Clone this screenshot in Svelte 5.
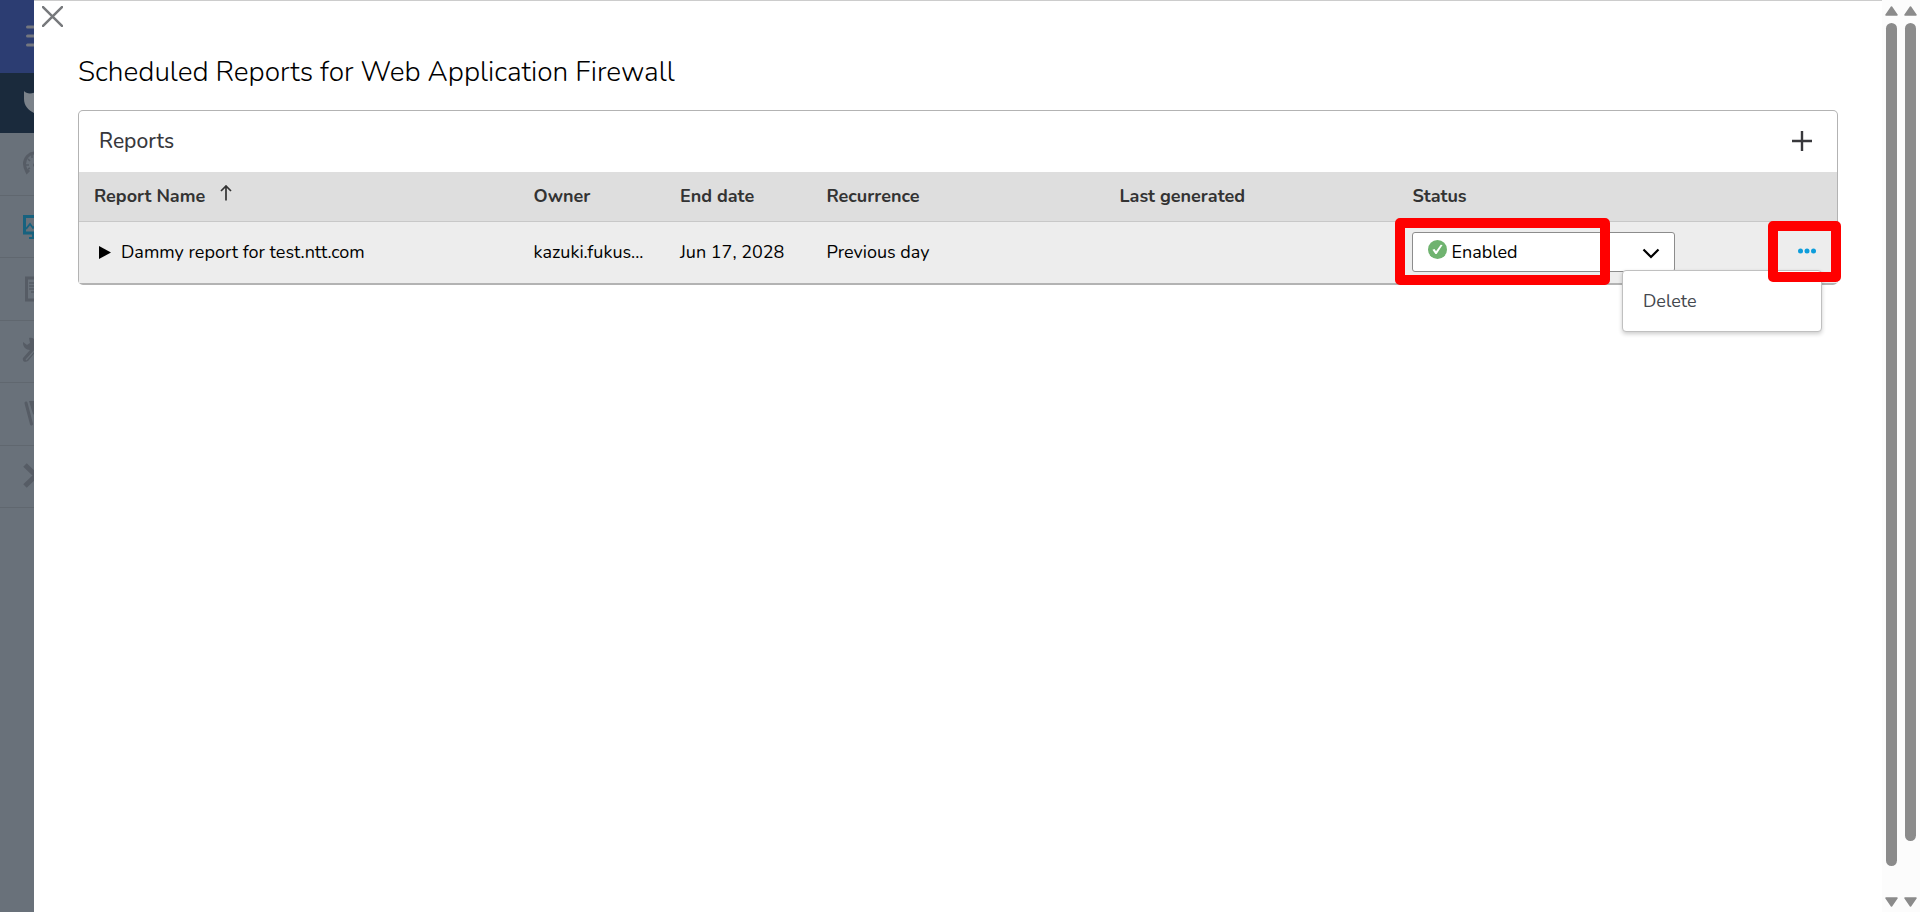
<script lang="ts">
  type Report = {
    id: number
    name: string
    owner: string
    endDate: string
    recurrence: string
    lastGenerated: string
    status: string
  }

  const reports: Report[] = [
    {
      id: 1,
      name: 'Dammy report for test.ntt.com',
      owner: 'kazuki.fukus...',
      endDate: 'Jun 17, 2028',
      recurrence: 'Previous day',
      lastGenerated: '',
      status: 'Enabled'
    }
  ]

  const scrollbars = ['outer', 'inner']

  // Report whose action menu is open
  let openMenu: number | null = $state(1)

  function toggleMenu(id: number) {
    openMenu = openMenu === id ? null : id
  }
</script>

<div class="shell">
  <!-- Dimmed navigation behind the dialog -->
  <nav class="rail" aria-label="Main">
    <div class="rail-top">
      <svg width="34" height="73" viewBox="0 0 34 73" aria-hidden="true">
        <path d="M27.500 27H46M27.500 36H46M27.500 45H46" stroke="#74777f" stroke-width="3" stroke-linecap="round" />
      </svg>
    </div>
    <div class="rail-brand">
      <svg width="34" height="60" viewBox="0 0 34 60" aria-hidden="true">
        <path d="M24 18C26 21 32 21 36 19V41C29 38 24 33 24 26Z" fill="#7b828a" />
      </svg>
    </div>
    <div class="rail-items">
      <div class="rail-item">
        <svg width="34" height="60" viewBox="0 1 34 60" aria-hidden="true">
          <path d="M35 21C29 21 24.500 26 24.500 32C24.500 35 25.500 37 27 40L29 38" fill="none" stroke="#565c65" stroke-width="3" />
          <path d="M28 27l2 2M26 33h3M32 23v3M28 37l2-1" stroke="#565c65" stroke-width="1.500" />
          <circle cx="35" cy="33" r="2" fill="#565c65" />
        </svg>
      </div>
      <div class="rail-item">
        <svg width="34" height="60" viewBox="0 1 34 60" aria-hidden="true">
          <path d="M36 21.500H24.500V38H36" fill="none" stroke="#17627f" stroke-width="3" />
          <path d="M26 34l4-5 3 4 3-3M29 43h7M33 39v4" fill="none" stroke="#17627f" stroke-width="1.800" />
        </svg>
      </div>
      <div class="rail-item">
        <svg width="34" height="60" viewBox="0 1 34 60" aria-hidden="true">
          <path d="M36 21H26.500V43H36" fill="none" stroke="#565c65" stroke-width="3" />
          <path d="M29 26h6M29 29h6M29 32h6M31 35h4" stroke="#565c65" stroke-width="1.500" />
        </svg>
      </div>
      <div class="rail-item">
        <svg width="34" height="60" viewBox="0 1 34 60" aria-hidden="true">
          <path d="M23 22l4 3 3-2-1-5c4-1 7 2 8 6v6l-9 11c-3 2-6 0-5-3l7-8c-4 0-7-3-7-7Z" fill="#565c65" />
          <path d="M26 40l9-10" stroke="#69717a" stroke-width="1.200" />
        </svg>
      </div>
      <div class="rail-item">
        <svg width="34" height="60" viewBox="0 1 34 60" aria-hidden="true">
          <path d="M26 21L31.500 42" stroke="#565c65" stroke-width="3" stroke-linecap="round" />
          <path d="M29 19H36V34L33 32Z" fill="#565c65" />
        </svg>
      </div>
      <div class="rail-item">
        <svg width="34" height="60" viewBox="0 1 34 60" aria-hidden="true">
          <path d="M25 20L36 30.500L25 41" fill="none" stroke="#565c65" stroke-width="5" />
        </svg>
      </div>
    </div>
  </nav>

  <main class="dialog">
    <button class="icon-button close" aria-label="Close">
      <svg width="21" height="21" viewBox="0 0 20 20" aria-hidden="true">
        <path d="M1 1L19 19M19 1L1 19" stroke="#77797c" stroke-width="2.400" stroke-linecap="round" />
      </svg>
    </button>

    <h1>Scheduled Reports for Web Application Firewall</h1>

    <section class="card">
      <header class="card-header">
        <h2>Reports</h2>
        <button class="icon-button" aria-label="Add report">
          <svg width="20" height="20" viewBox="0 0 20 20" aria-hidden="true">
            <path d="M10 0V20M0 10H20" stroke="#38383c" stroke-width="2.400" />
          </svg>
        </button>
      </header>

      <table>
        <thead>
          <tr>
            <th class="col-wide">
              Report Name
              <svg class="sort" width="12" height="16" viewBox="0 0 12 16" aria-hidden="true">
                <path d="M6 15.500V1.500M1 6L6 1L11 6" fill="none" stroke="#333" stroke-width="1.700" />
              </svg>
            </th>
            <th class="col-small">Owner</th>
            <th class="col-small">End date</th>
            <th class="col-medium">Recurrence</th>
            <th class="col-medium">Last generated</th>
            <th class="col-medium">Status</th>
            <th class="col-small" aria-label="Actions"></th>
          </tr>
        </thead>
        <tbody>
          {#each reports as report (report.id)}
            <tr>
              <td>
                <div class="name">
                  <button class="icon-button" aria-label="Expand report">
                    <svg width="12" height="13" viewBox="0 0 12 13" aria-hidden="true">
                      <path d="M0 0L12 6.500L0 13Z" fill="#000" />
                    </svg>
                  </button>
                  <span>{report.name}</span>
                </div>
              </td>
              <td>{report.owner}</td>
              <td>{report.endDate}</td>
              <td>{report.recurrence}</td>
              <td>{report.lastGenerated}</td>
              <td>
                <div class="status">
                  <select aria-label="Status" value={report.status}>
                    <option>Enabled</option>
                    <option>Disabled</option>
                  </select>
                  <svg class="check" width="19" height="19" viewBox="0 0 18 18" aria-hidden="true">
                    <circle cx="9" cy="9" r="9" fill="#6fb36f" />
                    <path d="M4.200 9.200L6.200 8.600L7.600 10.600L12 4.500L13.800 4.800L8.200 13.200H7Z" fill="#fff" />
                  </svg>
                  <svg class="chevron" width="18" height="11" viewBox="0 0 18 11" aria-hidden="true">
                    <path d="M1.500 1.500L9 9L16.500 1.500" fill="none" stroke="#000" stroke-width="2.200" />
                  </svg>
                  <div class="highlight highlight--status"></div>
                </div>
              </td>
              <td>
                <div class="actions">
                  <button
                    class="icon-button"
                    aria-label="More actions"
                    aria-expanded={openMenu === report.id}
                    onclick={() => toggleMenu(report.id)}
                  >
                    <svg width="18" height="6" viewBox="0 0 18 6" aria-hidden="true">
                      <g fill="#0d9ddb">
                        <circle cx="2.500" cy="3" r="2.500" />
                        <circle cx="9" cy="3" r="2.500" />
                        <circle cx="15.500" cy="3" r="2.500" />
                      </g>
                    </svg>
                  </button>
                  {#if openMenu === report.id}
                    <div class="menu">
                      <button>Delete</button>
                    </div>
                  {/if}
                  <div class="highlight highlight--actions"></div>
                </div>
              </td>
            </tr>
          {/each}
        </tbody>
      </table>
    </section>
  </main>

  <div class="scrollbars" aria-hidden="true">
    {#each scrollbars as bar (bar)}
      <div class="track">
        <svg width="13" height="10" viewBox="0 0 13 10">
          <path d="M6.500 1L12 9H1Z" fill="#8b8b8b" stroke="#8b8b8b" stroke-width="1.500" stroke-linejoin="round" />
        </svg>
        <div class="thumb-area">
          <div class="thumb thumb--{bar}"></div>
        </div>
        <svg width="13" height="10" viewBox="0 0 13 10">
          <path d="M6.500 9L12 1H1Z" fill="#8b8b8b" stroke="#8b8b8b" stroke-width="1.500" stroke-linejoin="round" />
        </svg>
      </div>
    {/each}
  </div>
</div>

<style>
  :global(body) {
    margin: 0;
  }

  .shell {
    display: flex;
    min-height: 100vh;
    background: #fff;
    color: #000;
    font-family: Nunito, "Noto Sans", sans-serif;
    font-size: 18px;
    line-height: 24px;
  }

  /* -- Navigation rail -- */
  .rail {
    width: 34px;
    flex-shrink: 0;
    overflow: hidden;
    background: #69717a;
  }

  .rail svg {
    display: block;
  }

  .rail-top {
    background: #2c3d72;
  }

  .rail-brand {
    background: #1a2a3c;
  }

  .rail-items {
    display: grid;
    grid-template-rows: repeat(6, 1fr);
    height: 375px;
  }

  .rail-item {
    border-bottom: 1px solid #60676f;
  }

  /* -- Dialog -- */
  .dialog {
    position: relative;
    flex: 1;
    min-width: 0;
    border-top: 1px solid #ccc;
    padding: 52px 44px 44px;
  }

  .icon-button {
    display: flex;
    padding: 0;
    border: none;
    background: none;
    cursor: pointer;
  }

  .close {
    position: absolute;
    top: 5px;
    left: 8px;
  }

  h1 {
    margin: 0;
    font-size: 28px;
    font-weight: 350;
    line-height: 38px;
  }

  .card {
    margin-top: 19px;
    border: 1px solid #b3b3b3;
    border-bottom-width: 2px;
    border-radius: 5px;
  }

  .card-header {
    display: flex;
    align-items: center;
    justify-content: space-between;
    height: 60px;
    padding: 0 25px 1px 20px;
  }

  h2 {
    margin: 0;
    font-size: 21px;
    font-weight: 500;
    color: #38383c;
  }

  /* -- Table -- */
  table {
    width: 100%;
    table-layout: fixed;
    border-collapse: collapse;
  }

  th,
  td {
    box-sizing: border-box;
    padding: 0 15px;
    text-align: left;
    white-space: nowrap;
  }

  th {
    height: 49px;
    background: #dedede;
    border-bottom: 1px solid #c8c8c8;
    color: #333;
    font-weight: 700;
  }

  td {
    height: 62px;
    background: #ededed;
  }

  .col-wide {
    width: 25%;
  }

  .col-medium {
    width: 16.6667%;
  }

  .col-small {
    width: 8.3333%;
  }

  .sort {
    margin-left: 10px;
    vertical-align: 1px;
  }

  .name {
    display: flex;
    align-items: center;
    gap: 10px;
    padding-left: 5px;
  }

  .status {
    position: relative;
  }

  select {
    display: block;
    width: 100%;
    height: 40px;
    padding: 0 38px;
    border: 1px solid #8c8c8c;
    border-radius: 3px;
    background: #fff;
    color: #000;
    font: inherit;
    appearance: none;
  }

  .check {
    position: absolute;
    top: 8px;
    left: 16px;
  }

  .chevron {
    position: absolute;
    top: 16px;
    right: 15px;
    pointer-events: none;
  }

  .actions {
    position: relative;
    display: flex;
    justify-content: flex-end;
    padding: 0 6px 2px 0;
  }

  .menu {
    position: absolute;
    z-index: 1;
    top: 22px;
    right: 0;
    width: 200px;
    box-sizing: border-box;
    padding: 10px 0;
    border: 1px solid #c0c0c0;
    border-radius: 4px;
    background: #fff;
    box-shadow: 0 2px 4px rgba(0, 0, 0, 0.2);
  }

  .menu button {
    display: block;
    width: 100%;
    padding: 8px 20px;
    border: none;
    background: none;
    color: #44484e;
    font: inherit;
    text-align: left;
    cursor: pointer;
  }

  /* -- Callout frames -- */
  .highlight {
    position: absolute;
    z-index: 2;
    box-sizing: border-box;
    border: 10px solid #f00;
    border-radius: 5px;
    pointer-events: none;
  }

  .highlight--status {
    top: -14px;
    left: -17px;
    width: 215px;
    height: 67px;
  }

  .highlight--actions {
    top: -27px;
    right: -19px;
    width: 73px;
    height: 61px;
  }

  /* -- Scrollbars -- */
  .scrollbars {
    display: flex;
    flex-shrink: 0;
    gap: 6px;
    padding: 6px 3px 5px;
    background: #fcfcfc;
  }

  .track {
    display: flex;
    flex-direction: column;
    align-items: center;
    gap: 7px;
  }

  .thumb-area {
    flex: 1;
    width: 11px;
  }

  .thumb {
    border-radius: 6px;
    background: #8b8b8b;
  }

  .thumb--outer {
    height: 97.2%;
  }

  .thumb--inner {
    height: 94.3%;
  }
</style>
